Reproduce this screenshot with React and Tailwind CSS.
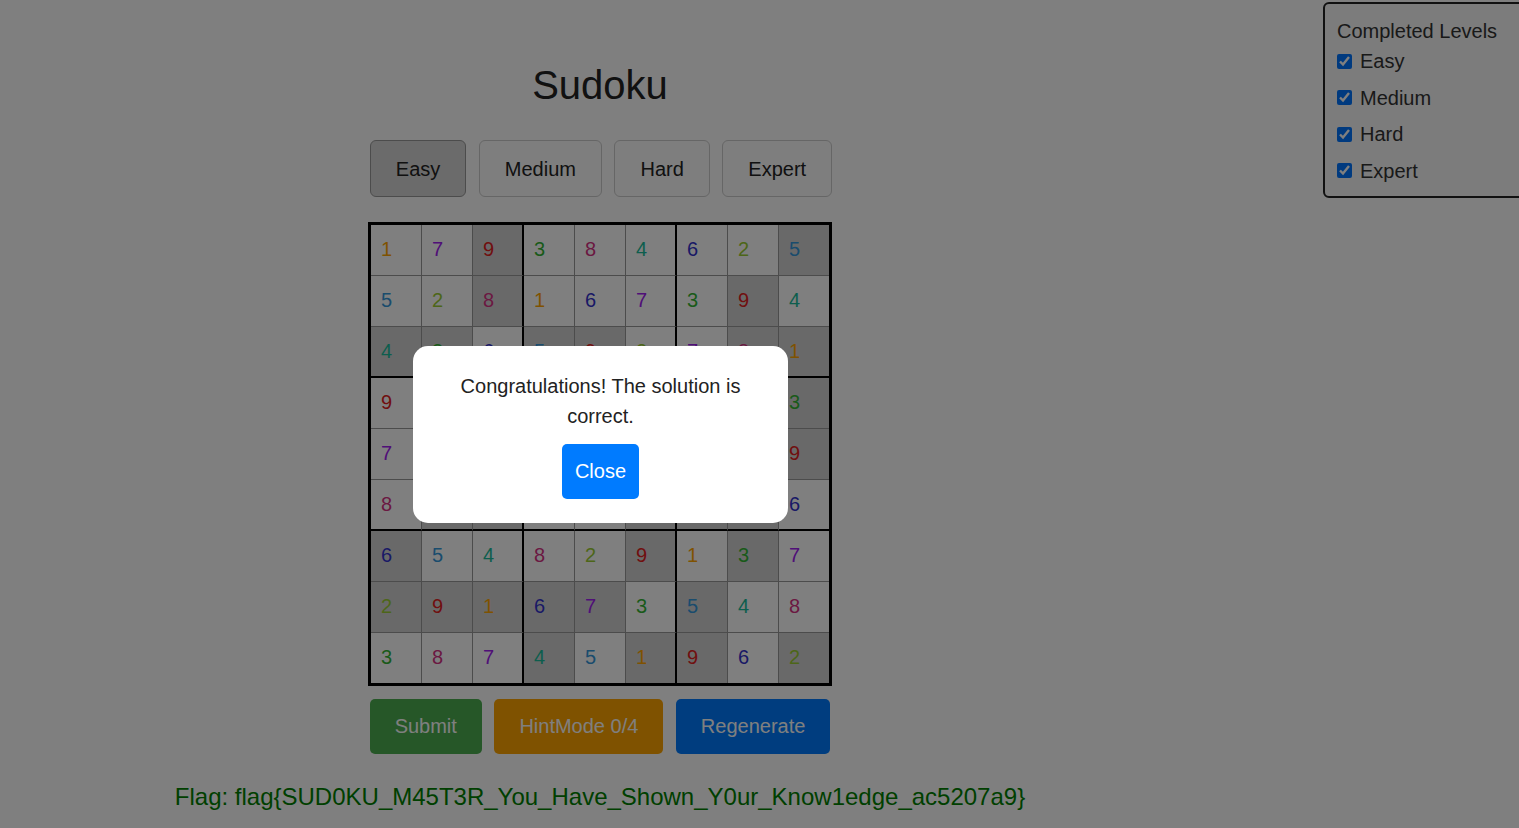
import React from 'react'

const board = [
  [1, 7, 9, 3, 8, 4, 6, 2, 5],
  [5, 2, 8, 1, 6, 7, 3, 9, 4],
  [4, 3, 6, 5, 9, 2, 7, 8, 1],
  [9, 6, 5, 7, 4, 8, 2, 1, 3],
  [7, 4, 3, 2, 1, 6, 8, 5, 9],
  [8, 1, 2, 9, 3, 5, 4, 7, 6],
  [6, 5, 4, 8, 2, 9, 1, 3, 7],
  [2, 9, 1, 6, 7, 3, 5, 4, 8],
  [3, 8, 7, 4, 5, 1, 9, 6, 2],
]

// shaded = given cells
const shaded = [
  [0, 0, 1, 0, 0, 0, 0, 0, 1],
  [0, 0, 1, 0, 0, 0, 0, 1, 0],
  [1, 1, 0, 1, 1, 0, 0, 1, 1],
  [0, 1, 0, 0, 1, 0, 1, 0, 1],
  [0, 0, 1, 1, 0, 0, 1, 0, 1],
  [0, 1, 1, 0, 0, 1, 1, 1, 0],
  [1, 0, 0, 0, 0, 1, 0, 1, 0],
  [1, 1, 1, 1, 1, 0, 1, 0, 0],
  [0, 0, 0, 1, 0, 1, 1, 0, 1],
]

const digitColor = {
  1: 'text-[#ffa500]',
  2: 'text-[#9acd32]',
  3: 'text-[#32b432]',
  4: 'text-[#1abc9c]',
  5: 'text-[#3498db]',
  6: 'text-[#3333cc]',
  7: 'text-[#a020f0]',
  8: 'text-[#d63384]',
  9: 'text-[#e02020]',
}

function Cell({ value, r, c }) {
  const bg = shaded[r][c] ? 'bg-[#d3d3d3]' : 'bg-white'
  const right =
    c === 8 ? 'w-[50px]' : c % 3 === 2 ? 'w-[51px] border-r-2 border-r-black' : 'w-[51px] border-r border-r-[#999]'
  const bottom =
    r === 8 ? 'h-[50px]' : r % 3 === 2 ? 'h-[51px] border-b-2 border-b-black' : 'h-[51px] border-b border-b-[#999]'
  return (
    <div className={`flex items-center pb-[2px] pl-[10px] text-[20px] ${bg} ${right} ${bottom} ${digitColor[value]}`}>
      {value}
    </div>
  )
}

const levels = ['Easy', 'Medium', 'Hard', 'Expert']

export default function App() {
  return (
    <div className="relative min-h-screen w-full overflow-hidden bg-white font-['Liberation_Sans',Arial,sans-serif]">
      <div className="flex w-[1200px] flex-col items-center pt-[62px]">
        <h1 className="text-[40px] leading-[46px] text-[#222]">Sudoku</h1>

        <div className="mt-[32px] ml-[2px] flex gap-[12.5px]">
          {levels.map((level, i) => (
            <button
              key={level}
              className={`rounded-[6px] border px-[25px] pb-[15px] pt-[17px] text-[20px] leading-[23px] text-[#222] ${
                i === 0 ? 'border-[#999] bg-[#d6d6d6]' : 'border-[#ccc] bg-[#fcfcfc]'
              }`}
            >
              {level}
            </button>
          ))}
        </div>

        <div className="mt-[25px] grid grid-cols-[repeat(9,auto)] border-[3px] border-black">
          {board.map((row, r) => row.map((value, c) => <Cell key={`${r}-${c}`} value={value} r={r} c={c} />))}
        </div>

        <div className="mt-[13px] flex gap-[12.5px]">
          <button className="rounded-[5px] bg-[#4caf50] px-[25px] py-4 text-[20px] leading-[23px] text-white">Submit</button>
          <button className="rounded-[5px] bg-[#ffa500] px-[25px] py-4 text-[20px] leading-[23px] text-white">HintMode 0/4</button>
          <button className="rounded-[5px] bg-[#007bff] px-[25px] py-4 text-[20px] leading-[23px] text-white">Regenerate</button>
        </div>

        <p className="mt-[29px] text-[24px] leading-[28px] text-[#008000]">
          Flag: flag{'{'}SUD0KU_M45T3R_You_Have_Shown_Y0ur_Know1edge_ac5207a9{'}'}
        </p>
      </div>

      <div className="absolute left-[1323px] top-[2px] w-[210px] rounded-[6px] border-2 border-[#222] bg-[#f8f8f8] pb-[7px] pl-[12px] pt-[15px] text-[20px] text-[#333]">
        <div className="leading-[24px]">Completed Levels</div>
        {levels.map((level) => (
          <label key={level} className="flex h-[36.5px] items-center gap-[8px]">
            <input type="checkbox" checked readOnly className="m-0 h-[15px] w-[15px] accent-[#0075ff]" />
            <span className="leading-[24px]">{level}</span>
          </label>
        ))}
      </div>

      <div className="fixed inset-0 bg-black/50" />

      <div className="absolute left-[413px] top-[346px] w-[375px] rounded-[15px] bg-white px-5 pb-[24px] pt-[25px] text-center">
        <p className="text-[20px] leading-[30px] text-[#222]">Congratulations! The solution is correct.</p>
        <button className="mt-[13px] rounded-[5px] bg-[#007bff] px-[13px] py-4 text-[20px] leading-[23px] text-white">
          Close
        </button>
      </div>
    </div>
  )
}
